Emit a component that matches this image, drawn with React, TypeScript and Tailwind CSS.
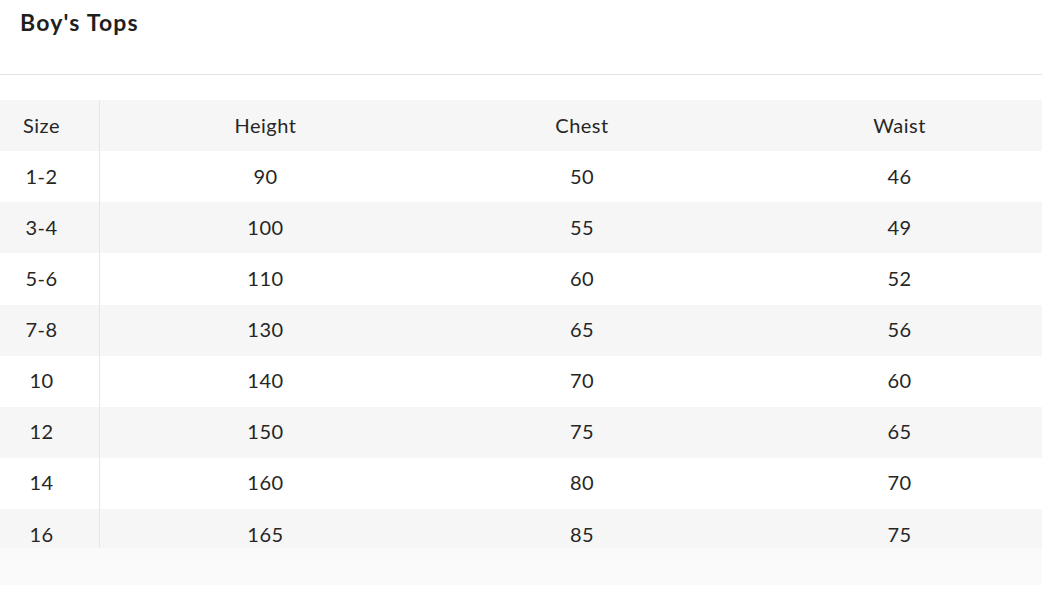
const rows = [
  ["1-2", "90", "50", "46"],
  ["3-4", "100", "55", "49"],
  ["5-6", "110", "60", "52"],
  ["7-8", "130", "65", "56"],
  ["10", "140", "70", "60"],
  ["12", "150", "75", "65"],
  ["14", "160", "80", "70"],
  ["16", "165", "85", "75"],
];

const cols = "grid grid-cols-[100px_331px_302px_309px]";

function Row({ cells, shaded }: { cells: string[]; shaded: boolean }) {
  return (
    <div className={`${cols} h-[51.125px] ${shaded ? "bg-[#f6f6f6]" : "bg-white"}`}>
      <div className="flex items-center justify-center border-r border-[#e6e6e6] pr-[16px] pb-[2px]">{cells[0]}</div>
      <div className="flex items-center justify-center pb-[2px]">{cells[1]}</div>
      <div className="flex items-center justify-center pb-[2px]">{cells[2]}</div>
      <div className="flex items-center justify-center pl-[24px] pb-[2px]">{cells[3]}</div>
    </div>
  );
}

export default function App() {
  return (
    <div className="h-[608px] w-[1042px] overflow-hidden bg-white text-[#262626]" style={{ fontFamily: "Lato, 'Liberation Sans', sans-serif" }}>
      <div className="h-[75px] border-b border-[#e3e3e3] px-[20px] pt-[7px]">
        <h1 className="text-[23px] font-bold leading-[30px] tracking-[1.2px] text-[#1f1f1f]">Boy's Tops</h1>
      </div>
      <div className="h-[25px]" />
      <div className="h-[448px] overflow-hidden text-[20px] tracking-[0.5px]">
        <Row cells={["Size", "Height", "Chest", "Waist"]} shaded />
        {rows.map((r, i) => (
          <Row key={r[0]} cells={r} shaded={i % 2 === 1} />
        ))}
      </div>
      <div className="h-[37px] bg-[#fafafa]" />
    </div>
  );
}
